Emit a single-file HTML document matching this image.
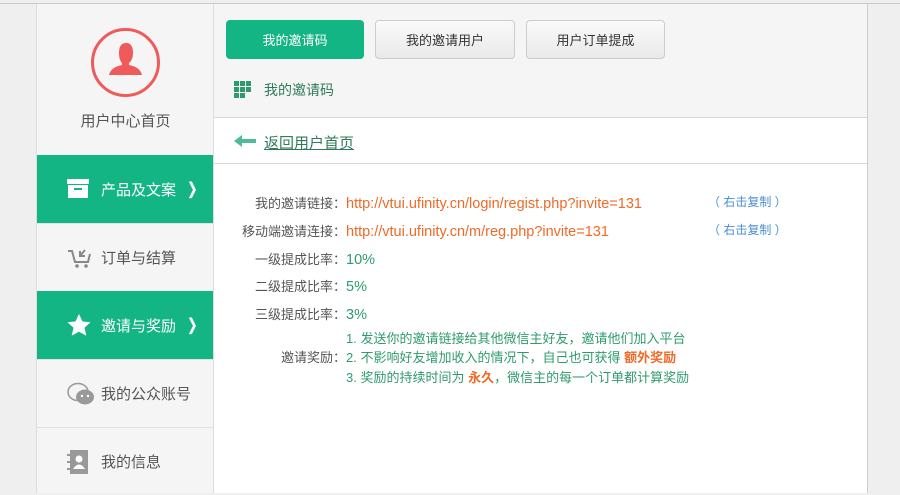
<!DOCTYPE html><html><head><meta charset="utf-8"><style>
*{margin:0;padding:0;box-sizing:border-box}
body{width:900px;height:493px;background:#efefef;font-family:"Liberation Sans","Noto Sans CJK SC",sans-serif;position:relative;overflow:hidden}
.topl{position:absolute;left:0;top:3px;width:900px;height:1px;background:#c8c8c8}
.side{position:absolute;left:36px;top:4px;width:178px;height:489px;background:#f5f5f5;border-left:1px solid #ddd;border-right:1px solid #ddd}
.logo{height:151px;position:relative}
.circ{position:absolute;left:54px;top:24px;width:69px;height:69px;border:3px solid #f05a5a;border-radius:50%}
.lt{position:absolute;left:0;width:177px;top:106px;text-align:center;font-size:15px;color:#555}
.it{height:68px;border-top:1px solid #e2e2e2;position:relative;font-size:15px;color:#555;display:flex;align-items:center;padding-left:64px}
.it.g{background:#14b584;color:#fff;border-top:none}
.it svg{position:absolute;left:30px}
.arr{position:absolute;right:14px;font-weight:bold;font-size:16px}
.main{position:absolute;left:214px;top:4px;width:654px;height:489px;background:#fff;border-right:1px solid #ccc}
.hdr{height:114px;background:#f5f5f5;border-bottom:1px solid #d8d8d8;position:relative}
.btn{position:absolute;top:16px;height:39px;border-radius:4px;font-size:13px;text-align:center;line-height:39px;color:#333;border:1px solid #ccc;background:linear-gradient(#fafafa,#e9e9e9)}
.btn.on{background:#14b584;border-color:#14b584;color:#fff}
.back{height:46px;border-bottom:1px solid #d8d8d8;position:relative}
.row{position:absolute;font-size:13px;color:#555;white-space:nowrap}
.lab{display:inline-block;width:132px;text-align:right}
.o{color:#f06a26}.gr{color:#2f9b6c}.b{color:#4a8fd6}
.u{font-size:14.5px}
</style></head><body>
<div class="topl"></div>
<div class="side">
 <div class="logo"><div class="circ"><svg width="63" height="63" viewBox="0 0 63 63"><path d="M25 22 q0-10 7-10 q7 0 7 10 q0 7-4 10 l0 2 q11 2 13 10 l-33 0 q2-8 13-10 l0-2 q-3-3-3-10z" fill="#f05a5a"/></svg></div><div class="lt">用户中心首页</div></div>
 <div class="it g"><svg width="22" height="20" viewBox="0 0 22 20"><rect x="0" y="0" width="22" height="5" fill="#fff"/><rect x="1" y="6" width="20" height="13" fill="#fff"/><rect x="7" y="9" width="8" height="2" fill="#14b584"/></svg>产品及文案<span class="arr">❭</span></div>
 <div class="it"><svg width="26" height="22" viewBox="0 0 26 22"><path d="M1 4 h4 l3 11 h13 l2-8" stroke="#888" stroke-width="2" fill="none"/><circle cx="10" cy="19" r="1.8" fill="#888"/><circle cx="19" cy="19" r="1.8" fill="#888"/><path d="M13 9 l5-6 M13 4 l0 5 l5 0" stroke="#888" stroke-width="2" fill="none"/></svg>订单与结算</div>
 <div class="it g"><svg width="24" height="22" viewBox="0 0 24 22"><path d="M12 0 l3.5 7.5 8 .8 -6 5.5 1.8 8 -7.3-4.2 -7.3 4.2 1.8-8 -6-5.5 8-.8z" fill="#fff"/></svg>邀请与奖励<span class="arr">❭</span></div>
 <div class="it"><svg width="28" height="24" viewBox="0 0 28 24"><ellipse cx="11" cy="10" rx="10" ry="8.5" fill="none" stroke="#999" stroke-width="1.5"/><ellipse cx="18" cy="15" rx="9" ry="7.5" fill="#999"/><circle cx="15" cy="14" r="1.2" fill="#fff"/><circle cx="21" cy="14" r="1.2" fill="#fff"/></svg>我的公众账号</div>
 <div class="it"><svg width="22" height="24" viewBox="0 0 22 24"><rect x="3" y="0" width="18" height="24" fill="#999"/><rect x="0" y="4" width="5" height="2" fill="#999"/><rect x="0" y="11" width="5" height="2" fill="#999"/><rect x="0" y="18" width="5" height="2" fill="#999"/><circle cx="12" cy="9" r="3.5" fill="#fff"/><path d="M6 19 q6-9 12 0z" fill="#fff"/></svg>我的信息</div>
</div>
<div class="main">
 <div class="hdr">
  <div class="btn on" style="left:12px;width:138px">我的邀请码</div>
  <div class="btn" style="left:161px;width:140px">我的邀请用户</div>
  <div class="btn" style="left:312px;width:139px">用户订单提成</div>
  <svg style="position:absolute;left:20px;top:77px" width="17" height="17" viewBox="0 0 17 17" fill="#2f9b6c"><rect x="0" y="0" width="5" height="5"/><rect x="6" y="0" width="5" height="5"/><rect x="12" y="0" width="5" height="5"/><rect x="0" y="6" width="5" height="5"/><rect x="6" y="6" width="5" height="5"/><rect x="12" y="6" width="5" height="5"/><rect x="0" y="12" width="5" height="5"/><rect x="6" y="12" width="5" height="5"/></svg>
  <div style="position:absolute;left:50px;top:76px;font-size:14px;color:#2f7a5a">我的邀请码</div>
 </div>
 <div class="back">
  <svg style="position:absolute;left:20px;top:17px" width="22" height="12" viewBox="0 0 22 12"><path d="M0 6 l8-6 v4 h14 v4 h-14 v4z" fill="#4cbb97"/></svg>
  <div style="position:absolute;left:50px;top:14px;font-size:15px;color:#2f7a5a;text-decoration:underline">返回用户首页</div>
 </div>
 <div class="row" style="left:0;top:189px"><span class="lab">我的邀请链接：</span><span class="o u">http://vtui.ufinity.cn/login/regist.php?invite=131</span></div>
 <div class="row b" style="left:494px;top:189px;font-size:12px">（ 右击复制 ）</div>
 <div class="row" style="left:0;top:217px"><span class="lab">移动端邀请连接：</span><span class="o u">http://vtui.ufinity.cn/m/reg.php?invite=131</span></div>
 <div class="row b" style="left:494px;top:217px;font-size:12px">（ 右击复制 ）</div>
 <div class="row" style="left:0;top:245px"><span class="lab">一级提成比率：</span><span class="gr u">10%</span></div>
 <div class="row" style="left:0;top:272px"><span class="lab">二级提成比率：</span><span class="gr u">5%</span></div>
 <div class="row" style="left:0;top:300px"><span class="lab">三级提成比率：</span><span class="gr u">3%</span></div>
 <div class="row gr" style="left:132px;top:324px">1. 发送你的邀请链接给其他微信主好友，邀请他们加入平台</div>
 <div class="row" style="left:0;top:343px"><span class="lab">邀请奖励：</span><span class="gr">2. 不影响好友增加收入的情况下，自己也可获得 <b class="o">额外奖励</b></span></div>
 <div class="row gr" style="left:132px;top:363px">3. 奖励的持续时间为 <b class="o">永久</b>，微信主的每一个订单都计算奖励</div>
</div>
</body></html>
